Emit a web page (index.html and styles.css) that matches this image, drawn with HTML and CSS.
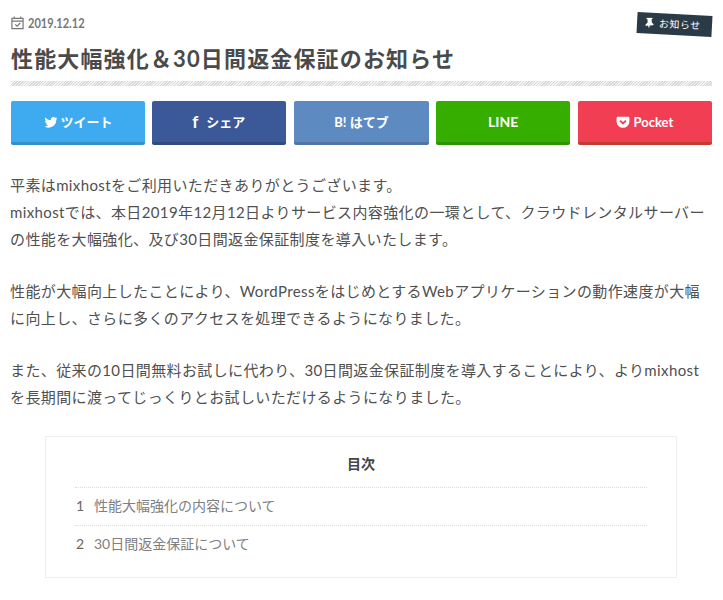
FILE: index.html
```html
<!DOCTYPE html>
<html lang="ja">
<head>
<meta charset="utf-8">
<title>性能大幅強化＆30日間返金保証のお知らせ</title>
<link rel="stylesheet" href="styles.css">
</head>
<body>
<article class="post">
  <div class="tag"><svg class="tag-icon" viewBox="0 0 12 14"><path d="M2 0l7-1 1 1.500-1.500 1L9 6l2.500 2-.3 1.500L6.500 10 5.500 14l-1.200-3.800L1 11l-.3-1.500L3.500 6 3 2 1.500 1.500z"/></svg>お知らせ</div>
  <div class="date"><svg class="date-icon" viewBox="0 0 14 14"><path d="M3.500 0v2M10.500 0v2M1 2h12v11H1zM1 5h12M4.500 8.500l2 2 3.500-3.500"/></svg><span class="date-text">2019.12.12</span></div>
  <h1 class="title">性能大幅強化＆30日間返金保証のお知らせ</h1>
  <div class="share">
    <a class="btn tw"><svg class="ico" viewBox="0 0 24 24"><path d="M23 5.500c-.8.400-1.700.600-2.600.700.900-.600 1.700-1.500 2-2.500-.9.500-1.900.900-2.900 1.100A4.600 4.600 0 0 0 11.700 9C7.900 8.800 4.500 7 2.300 4.200c-1.200 2.100-.6 4.800 1.400 6.100-.7 0-1.400-.2-2-.6 0 2.200 1.500 4.100 3.700 4.600-.7.200-1.400.2-2.100.1.600 1.800 2.300 3.100 4.300 3.200A9.300 9.300 0 0 1 1 19.500 13 13 0 0 0 21 8c.9-.7 1.500-1.500 2-2.500z"/></svg>ツイート</a>
    <a class="btn fb"><span class="f">f</span>シェア</a>
    <a class="btn hb">B! はてブ</a>
    <a class="btn ln">LINE</a>
    <a class="btn pk"><svg class="ico" viewBox="0 0 24 24"><path d="M3 3h18a2 2 0 0 1 2 2v6a11 11 0 0 1-22 0V5a2 2 0 0 1 2-2z"/><path class="pk-v" d="M7 9.500l5 5 5-5"/></svg>Pocket</a>
  </div>
  <div class="body">
    <p>平素はmixhostをご利用いただきありがとうございます。<br>mixhostでは、本日2019年12月12日よりサービス内容強化の一環として、クラウドレンタルサーバーの性能を大幅強化、及び30日間返金保証制度を導入いたします。</p>
    <p>性能が大幅向上したことにより、WordPressをはじめとするWebアプリケーションの動作速度が大幅に向上し、さらに多くのアクセスを処理できるようになりました。</p>
    <p>また、従来の10日間無料お試しに代わり、30日間返金保証制度を導入することにより、よりmixhostを長期間に渡ってじっくりとお試しいただけるようになりました。</p>
  </div>
  <nav class="toc">
    <div class="toc-title">目次</div>
    <ol class="toc-list">
      <li><span class="num">1</span><a>性能大幅強化の内容について</a></li>
      <li><span class="num">2</span><a>30日間返金保証について</a></li>
    </ol>
  </nav>
</article>
</body>
</html>
```
FILE: styles.css
```css
* { box-sizing: border-box; }
html, body { margin: 0; background: #fff; }
body {
  font-family: Lato, "Noto Sans CJK JP", sans-serif;
  color: #444;
  height: 600px;
  overflow: hidden;
}
.post { position: relative; padding: 15px 11px 0; }
.tag {
  position: absolute;
  top: 14px;
  left: 637px;
  width: 75px;
  height: 21px;
  background: #2b3a47;
  color: #fff;
  font-size: 10px;
  line-height: 21px;
  letter-spacing: .5px;
  transform: rotate(3deg);
  display: flex;
  align-items: center;
  padding-left: 8px;
  gap: 5px;
}
.tag-icon { width: 9px; height: 11px; fill: #fff; }
.date {
  display: flex;
  align-items: center;
  gap: 4px;
  font-size: 14px;
  font-weight: 700;
  line-height: 16px;
  color: #777;
}
.date-text { display: inline-block; transform: scaleX(.79); transform-origin: left center; }
.date-icon { width: 13px; height: 14px; fill: none; stroke: #777; stroke-width: 1.300; }
.title {
  margin: 12px 0 0;
  font-size: 22px;
  line-height: 32px;
  letter-spacing: 1.150px;
  font-weight: 700;
  color: #4a4a4a;
  padding-bottom: 11px;
  background: repeating-linear-gradient(-45deg, #d8d8d8 0 1px, #f4f4f4 1px 2px) bottom / 100% 5px no-repeat;
}
.share {
  display: grid;
  grid-template-columns: repeat(5, 1fr);
  gap: 7.500px;
  margin-top: 15px;
}
.btn {
  height: 44px;
  border-radius: 2px;
  border-bottom: 3px solid;
  color: #fff;
  display: flex;
  align-items: center;
  justify-content: center;
  gap: 3px;
  font-size: 13px;
  font-weight: 700;
}
.ico { width: 14px; height: 14px; fill: #fff; }
.pk-v { fill: none; stroke: #f13e53; stroke-width: 3; }
.f { font-size: 17px; margin-right: 5px; }
.tw { background: #3eaaf0; border-color: #3590ca; }
.fb { background: #3b5998; border-color: #324c81; margin: 0 1px 0 -1px; }
.hb { background: #5d8ac1; border-color: #4f75a4; }
.ln { background: #35ae00; border-color: #2d9400; font-size: 14px; }
.pk { background: #f13e53; border-color: #c13d2f; }
.body { margin: 27px 0 0 -1px; font-size: 15px; line-height: 27px; letter-spacing: .38px; color: #505050; }
.body p { margin: 0 0 25px; }
.toc {
  margin: 24px 35px 0 34px;
  border: 1px solid #eee;
  padding: 15px 29px 13px;
}
.toc-title {
  text-align: center;
  font-size: 14px;
  font-weight: 700;
  line-height: 24px;
  color: #444;
  padding-bottom: 11px;
  border-bottom: 1px dotted #ddd;
}
.toc-list { list-style: none; margin: 0; padding: 0; font-size: 14px; color: #808080; }
.toc-list li { display: flex; line-height: 35px; padding-left: 1px; height: 38px; border-bottom: 1px dotted #ddd; }
.toc-list li:last-child { border-bottom: 0; }
.num { width: 18px; color: #666; }
```
